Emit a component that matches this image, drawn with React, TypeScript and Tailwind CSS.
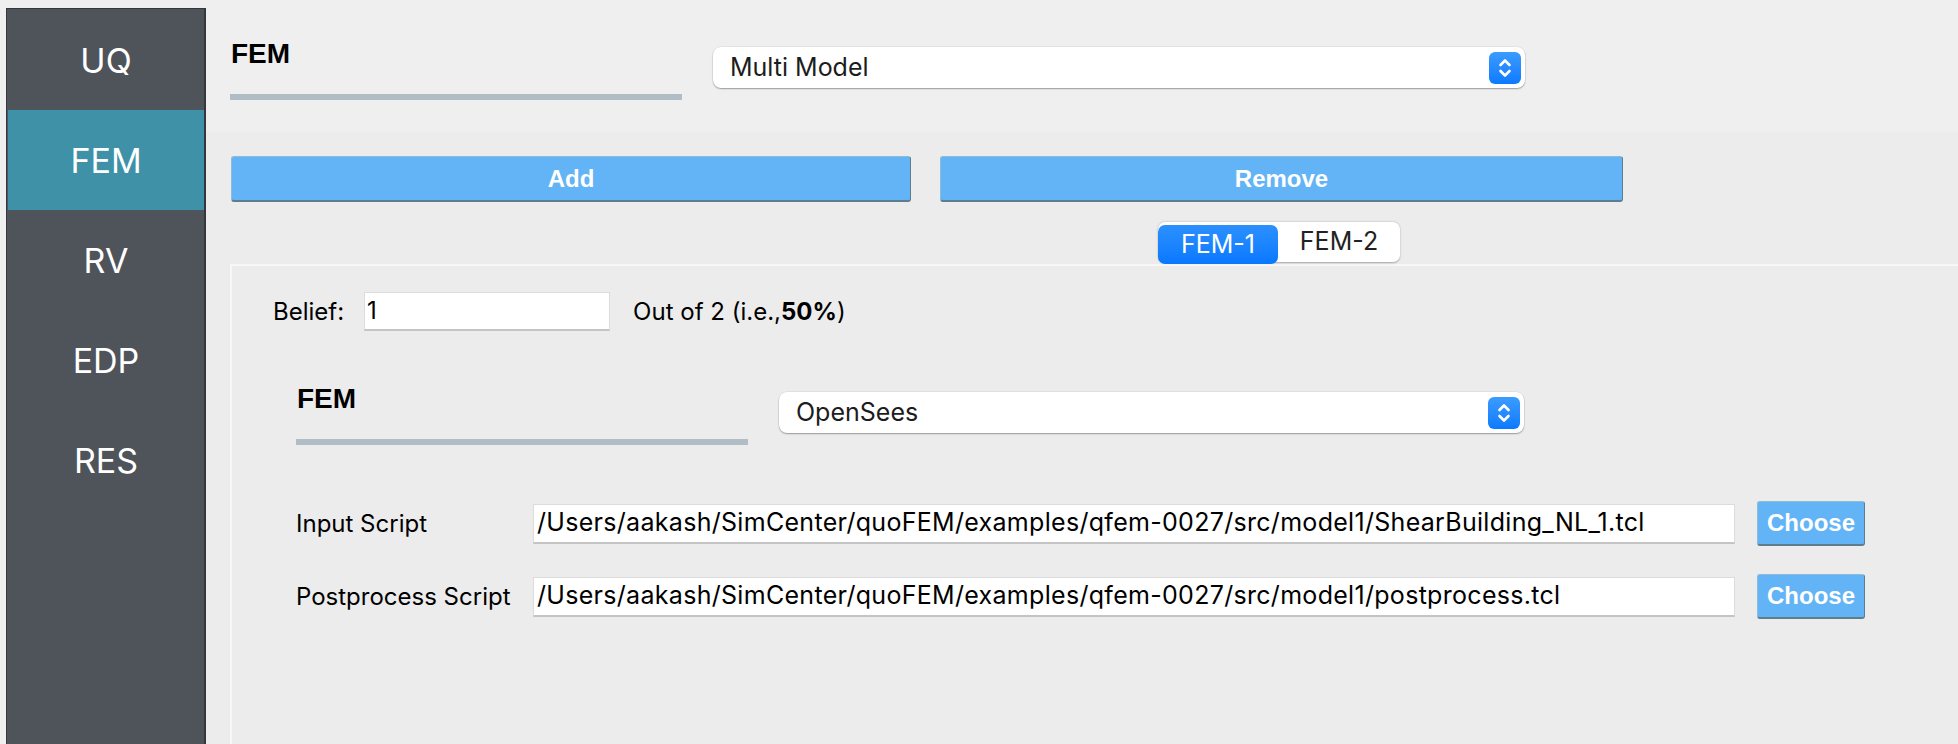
import React from "react";

const blueBtn =
  "bg-[#63b4f6] border border-[#8dbcd6] border-r-[#5e7d8f] border-b-2 border-b-[#5e7d8f] rounded-[3px] text-white font-bold text-[24px] font-['Liberation_Sans',Arial,sans-serif] flex items-center justify-center";

const field =
  "h-[40px] bg-white border border-[#dcdcdc] border-b-2 border-b-[#c4c4c4] flex items-center pl-[3px] text-[25px] tracking-[0.3px] text-black whitespace-nowrap overflow-hidden";

function Stepper() {
  return (
    <div className="w-[32px] h-[32px] rounded-[6px] bg-gradient-to-b from-[#3b9bff] to-[#0a7aff] flex items-center justify-center shrink-0">
      <svg width="32" height="32" viewBox="0 0 32 32" fill="none">
        <polyline points="11.5,13 16,8.5 20.5,13" stroke="white" strokeWidth="2.6" strokeLinecap="round" strokeLinejoin="round" />
        <polyline points="11.5,19 16,23.5 20.5,19" stroke="white" strokeWidth="2.6" strokeLinecap="round" strokeLinejoin="round" />
      </svg>
    </div>
  );
}

function Combo({ label, width }: { label: string; width: string }) {
  return (
    <div
      className={`${width} h-[41px] bg-white rounded-[8px] shadow-[0_1px_1.5px_rgba(0,0,0,0.32),0_0_0_0.5px_rgba(0,0,0,0.08)] flex items-center justify-between pl-[17px] pr-[4px] text-[25px] text-[#1c1c1c]`}
    >
      <span>{label}</span>
      <Stepper />
    </div>
  );
}

function SectionHeader({ label, width }: { label: string; width: string }) {
  return (
    <div className="flex items-start">
      <div className="w-[452px] flex flex-col">
        <div className="h-[28px] leading-[28px] text-[28px] font-bold text-black font-['Liberation_Sans',Arial,sans-serif] pl-[1px]">
          FEM
        </div>
        <div className="mt-[26px] h-[6px] bg-[#b1bdc5]" />
      </div>
      <div className="ml-[31px] mt-[7px]">
        <Combo label={label} width={width} />
      </div>
    </div>
  );
}

function FileRow({ label, path, className }: { label: string; path: string; className?: string }) {
  return (
    <div className={`flex items-center h-[45px] ${className ?? ""}`}>
      <div className="w-[237px] text-[24px] text-black">{label}</div>
      <div className={`${field} w-[1202px]`}>{path}</div>
      <div className={`${blueBtn} ml-[22px] w-[108px] h-[45px]`}>Choose</div>
    </div>
  );
}

export default function App() {
  const items = ["UQ", "FEM", "RV", "EDP", "RES"];
  return (
    <div className="w-[1958px] h-[744px] overflow-hidden flex bg-[#ececec] font-['Inter','Liberation_Sans',sans-serif]">
      <div className="pl-[6px] pt-[8px] bg-[#efefef] h-full shrink-0">
        <div className="w-[200px] h-full bg-[#4f535a] border-l border-t border-r-2 border-[#34373c] pl-[1px] pt-[1px] flex flex-col">
          {items.map((it) => (
            <div
              key={it}
              className={`h-[100px] flex items-center justify-center text-white text-[34px] ${
                it === "FEM" ? "bg-[#3e91a7]" : ""
              }`}
            >
              {it}
            </div>
          ))}
        </div>
      </div>

      <div className="flex-1 flex flex-col min-w-0">
        <div className="h-[132px] bg-[#efefef] pl-[24px] pt-[40px] shrink-0">
          <SectionHeader label="Multi Model" width="w-[812px]" />
        </div>

        <div className="flex pl-[25px] mt-[24px] gap-[29px]">
          <div className={`${blueBtn} w-[680px] h-[46px]`}>Add</div>
          <div className={`${blueBtn} w-[683px] h-[46px]`}>Remove</div>
        </div>

        <div className="mt-[20px] h-[42px] pl-[952px] flex items-start">
          <div className="relative flex h-[40px] bg-white rounded-[7px] shadow-[0_0.5px_2px_rgba(0,0,0,0.3)]">
            <div className="mt-[3px] h-[39px] w-[120px] rounded-[7px] bg-gradient-to-b from-[#2b90fe] to-[#0878ff] text-white text-[25px] flex items-center justify-center">
              FEM-1
            </div>
            <div className="w-[122px] h-[40px] text-[#222] text-[25px] flex items-center justify-center">
              FEM-2
            </div>
          </div>
        </div>

        <div className="ml-[24px] flex-1 border-l-2 border-t-2 border-[#f7f7f7]">
          <div className="mt-[26px] pl-[41px] flex items-center h-[39px]">
            <span className="text-[24px] text-black">Belief:</span>
            <div className="ml-[20px] w-[246px] h-[39px] bg-white border border-[#dcdcdc] border-b-2 border-b-[#c4c4c4] flex items-center pl-[2px] text-[24px] text-black">
              1
            </div>
            <span className="ml-[23px] text-[24px] text-black">
              Out of 2 (i.e.,<b className="font-bold">50%</b>)
            </span>
          </div>

          <div className="pl-[64px] mt-[54px]">
            <SectionHeader label="OpenSees" width="w-[745px]" />
            <FileRow
              className="mt-[56px]"
              label="Input Script"
              path="/Users/aakash/SimCenter/quoFEM/examples/qfem-0027/src/model1/ShearBuilding_NL_1.tcl"
            />
            <FileRow
              className="mt-[28px]"
              label="Postprocess Script"
              path="/Users/aakash/SimCenter/quoFEM/examples/qfem-0027/src/model1/postprocess.tcl"
            />
          </div>
        </div>
      </div>
    </div>
  );
}
